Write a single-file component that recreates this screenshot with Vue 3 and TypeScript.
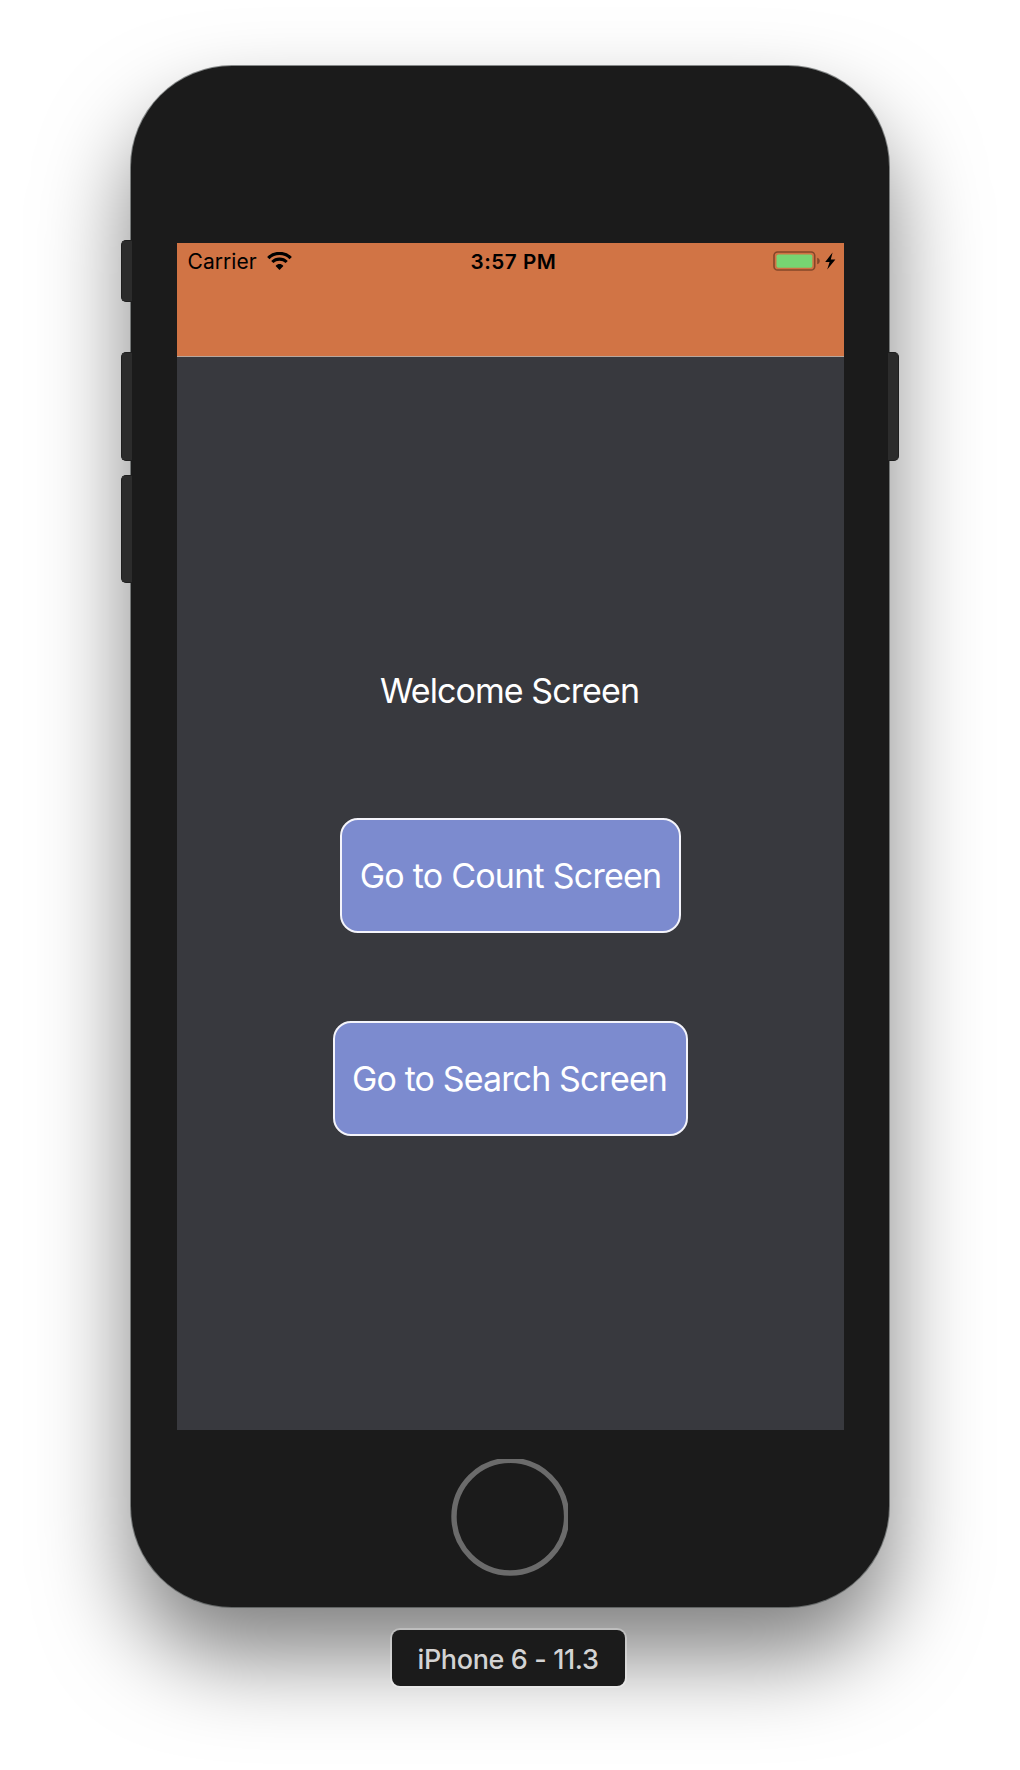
<script setup lang="ts">
interface NavButton {
  id: string
  label: string
}

const title = 'Welcome Screen'
const buttons: NavButton[] = [
  { id: 'count', label: 'Go to Count Screen' },
  { id: 'search', label: 'Go to Search Screen' },
]
const sideKeys: string[] = ['mute', 'volume-up', 'volume-down', 'power']
</script>

<template>
  <main class="desktop">
    <section class="phone">
      <i v-for="key in sideKeys" :key="key" class="key" :class="key"></i>
      <div class="screen">
        <header class="header">
          <div class="status">
            <div class="left">
              <span class="carrier">Carrier</span>
              <svg class="wifi" width="25" height="18" viewBox="0 0 25 18">
                <path d="M1.3 6.1C7.5-.1 17.5-.1 23.7 6.1" fill="none" stroke="#000" stroke-width="3.3" />
                <path d="M5.3 10C9.3 6.1 15.7 6.1 19.7 10" fill="none" stroke="#000" stroke-width="3.1" />
                <path d="M8.6 13.9C10.8 11.5 14.2 11.5 16.4 13.9L12.5 18Z" />
              </svg>
            </div>
            <span class="clock">3:57 PM</span>
            <div class="right">
              <svg width="63" height="20" viewBox="0 0 63 20">
                <rect x="1" y="1" width="40.7" height="18" rx="3.6" fill="none" stroke="#844729" stroke-width="1.6" />
                <rect x="3.5" y="3.4" width="35.8" height="13.4" rx="1.8" fill="#77d572" />
                <path d="M44.2 6.8C47.6 7.4 47.6 12.6 44.2 13.2Z" fill="#844729" />
                <path d="M59.6 1.4L52.2 11H56.6L54.2 18.6L62.4 8.4H57.8Z" />
              </svg>
            </div>
          </div>
        </header>
        <div class="content">
          <h1 class="title">{{ title }}</h1>
          <button v-for="b in buttons" :key="b.id" class="nav" :class="b.id" type="button">
            <span>{{ b.label }}</span>
          </button>
        </div>
      </div>
      <svg class="home" width="117" height="117" viewBox="0 0 117 117">
        <circle cx="59.3" cy="57.7" r="56.3" fill="none" stroke="#6b6b6b" stroke-width="5.4" />
      </svg>
    </section>
    <div class="badge"><span>iPhone 6 - 11.3</span></div>
  </main>
</template>

<style>
body {
  margin: 0;
  background: #fff;
}
</style>

<style scoped>
.desktop {
  box-sizing: border-box;
  width: 1020px;
  height: 1770px;
  padding-top: 66px;
  display: flex;
  flex-direction: column;
  align-items: center;
  overflow: hidden;
  background: #fff;
  font-family: Inter, "Liberation Sans", sans-serif;
}
.phone {
  position: relative;
  box-sizing: border-box;
  flex: none;
  width: 758px;
  height: 1541px;
  padding: 177px 0 0 46px;
  border-radius: 101px;
  background: #1b1b1b;
  box-shadow: 0 0 0 1px rgba(70, 75, 75, 0.62), 0 49px 90px rgba(0, 0, 0, 0.5);
}
.key {
  position: absolute;
  box-sizing: border-box;
  left: -10px;
  width: 11px;
  height: 109px;
  border: 1px solid #1f1f1f;
  border-right: 0;
  border-radius: 5px 0 0 5px;
  background: #2c2c2c;
}
.mute { top: 174px; height: 62px; }
.volume-up { top: 286px; }
.volume-down { top: 409px; height: 108px; }
.power {
  top: 286px;
  left: auto;
  right: -10px;
  border-right: 1px solid #1f1f1f;
  border-left: 0;
  border-radius: 0 5px 5px 0;
}
.screen {
  width: 667px;
  height: 1187px;
  display: flex;
  flex-direction: column;
  background: #38393e;
}
.header {
  box-sizing: border-box;
  flex: none;
  height: 114px;
  border-bottom: 1px solid #b8a79d;
  background: #d17445;
}
.status {
  display: flex;
  height: 36px;
  align-items: center;
  color: #000;
}
.left {
  display: flex;
  align-items: center;
  width: 283px;
  padding-left: 10.5px;
}
.carrier {
  width: 79.5px;
  font-size: 21px;
  letter-spacing: 0.05px;
  white-space: nowrap;
}
.clock {
  width: 100px;
  font-size: 20.7px;
  font-weight: 600;
  letter-spacing: 0.5px;
  white-space: nowrap;
}
.right {
  display: flex;
  margin-left: auto;
  padding-right: 8px;
}
.content {
  flex: 1;
  display: flex;
  flex-direction: column;
  align-items: center;
}
.title {
  margin: 312px 2px 0 0;
  height: 44px;
  font-size: 34px;
  font-weight: 400;
  line-height: 44px;
  letter-spacing: -0.92px;
  color: #fff;
  white-space: nowrap;
}
.nav {
  box-sizing: border-box;
  width: 341px;
  height: 115px;
  margin-top: 105px;
  padding: 0;
  border: 2px solid #f4f4fb;
  border-radius: 18px;
  background: #7c8bcf;
  color: #fff;
  font: 400 34px/44px Inter, "Liberation Sans", sans-serif;
  letter-spacing: -0.76px;
  white-space: nowrap;
}
.search {
  width: 355px;
  margin-top: 88px;
  padding-right: 2px;
  letter-spacing: -0.87px;
}
.home {
  display: block;
  margin: 29px 0 0 274px;
}
.badge {
  box-sizing: border-box;
  flex: none;
  display: flex;
  align-items: center;
  justify-content: center;
  position: relative;
  width: 233px;
  height: 56px;
  margin: 23px 3px 0 0;
  padding: 2px 1px 0 0;
  border-radius: 8px;
  background: #1b1b1b;
  box-shadow: 0 0 0 2px rgba(255, 255, 255, 0.3);
  color: #d3d3d3;
  font-size: 27px;
  font-weight: 500;
  letter-spacing: -0.38px;
  white-space: nowrap;
}
</style>
